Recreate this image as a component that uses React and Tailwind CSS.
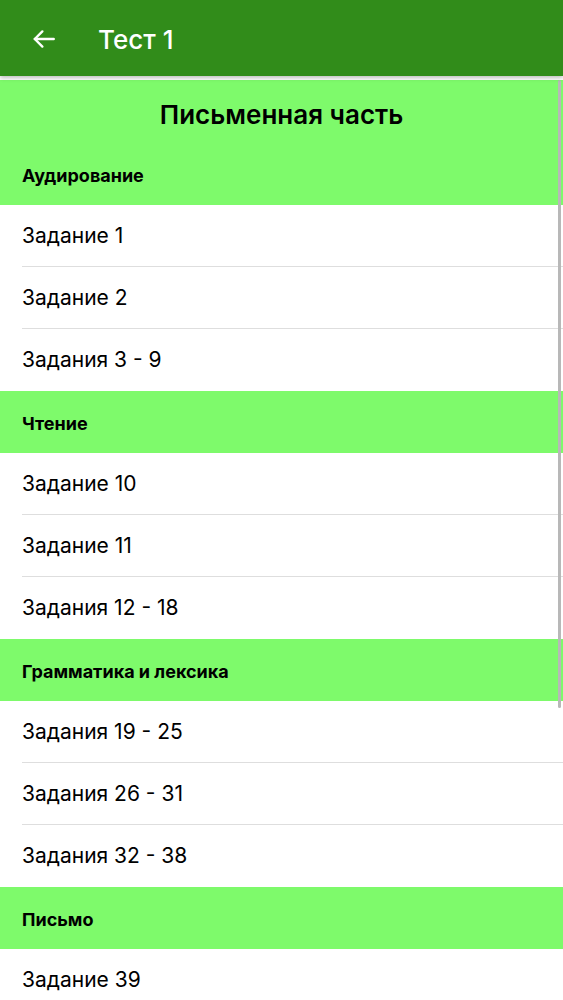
import React from 'react';

const sections = [
  { title: 'Аудирование', items: ['Задание 1', 'Задание 2', 'Задания 3 - 9'] },
  { title: 'Чтение', items: ['Задание 10', 'Задание 11', 'Задания 12 - 18'] },
  { title: 'Грамматика и лексика', items: ['Задания 19 - 25', 'Задания 26 - 31', 'Задания 32 - 38'] },
  { title: 'Письмо', items: ['Задание 39'] },
];

const BackArrow = () => (
  <svg width="26" height="26" viewBox="0 0 24 24" fill="none" stroke="white" strokeWidth="2.2" strokeLinecap="round" strokeLinejoin="round">
    <path d="M21 12H3.5" />
    <path d="M10.5 5l-7 7 7 7" />
  </svg>
);

const App = () => {
  return (
    <div className="relative h-[1000px] w-full overflow-hidden bg-white font-['Inter',sans-serif] text-black">
      {/* TOP BAR */}
      <div className="relative z-10 flex h-[76px] items-center bg-[#318c1a] shadow-[0_2px_4px_rgba(0,0,0,0.25)]">
        <button className="ml-[31px] flex h-[26px] w-[26px] items-center justify-center pt-[2px]">
          <BackArrow />
        </button>
        <h1 className="ml-[41px] pt-[3px] text-[26px] font-medium text-white">Тест 1</h1>
      </div>

      <div className="pt-[4px]">
        {/* PAGE TITLE */}
        <div className="flex h-[63px] items-center justify-center bg-[#7efa6b] pt-[6px]">
          <h2 className="text-[26px] font-semibold">Письменная часть</h2>
        </div>

        {sections.map((section) => (
          <div key={section.title}>
            <div className="flex h-[62px] items-center bg-[#7efa6b] px-[22px] pt-[3px]">
              <span className="text-[18px] font-bold">{section.title}</span>
            </div>
            {section.items.map((item, i) => (
              <div key={item} className="pl-[22px]">
                <div
                  className={
                    'flex h-[62px] items-center text-[21px] ' +
                    (i < section.items.length - 1 ? 'border-b border-[#dedede]' : '')
                  }
                >
                  {item}
                </div>
              </div>
            ))}
          </div>
        ))}
      </div>

      {/* SCROLLBAR */}
      <div className="absolute right-[2px] top-[80px] h-[628px] w-[3px] rounded-full bg-[#b8b8b8]" />
    </div>
  );
};

export default App;
